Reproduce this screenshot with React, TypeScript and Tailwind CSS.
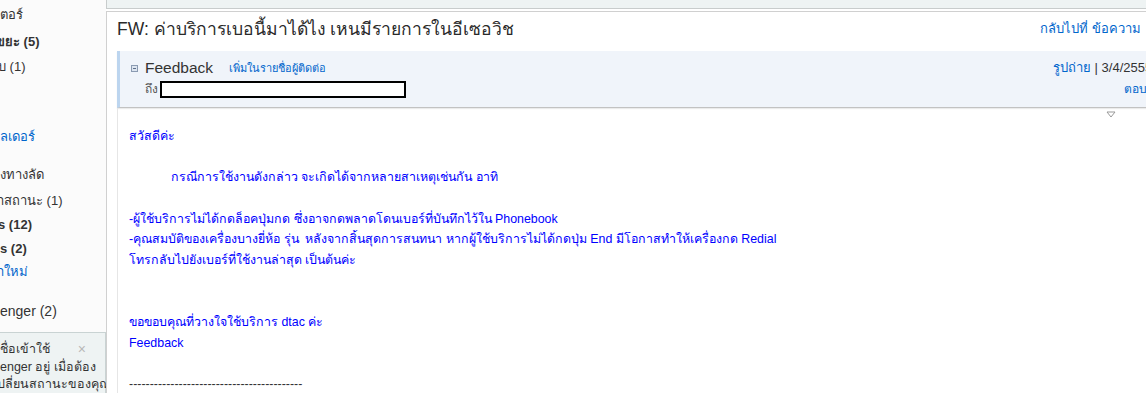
const FONT = "font-['Liberation_Sans','Tahoma','DejaVu_Sans',sans-serif]";

function Sidebar() {
  return (
    <div className="w-[106px] shrink-0 overflow-hidden bg-[#fbfbfb] text-[13px] text-[#333]">
      <div className="mt-[5px] h-[20px] leading-[20px] whitespace-nowrap">ตอร์</div>
      <div className="mt-[7px] h-[20px] leading-[20px] whitespace-nowrap font-bold -ml-[4px]">ขยะ (5)</div>
      <div className="mt-[5px] h-[20px] leading-[20px] whitespace-nowrap -ml-[2px]">บ (1)</div>
      <div className="mt-[50px] h-[20px] leading-[20px] whitespace-nowrap text-[#0066cc]">ลเดอร์</div>
      <div className="mt-[18px] h-[20px] leading-[20px] whitespace-nowrap">งทางลัด</div>
      <div className="mt-[6px] h-[20px] leading-[20px] whitespace-nowrap -ml-[3px]">าสถานะ (1)</div>
      <div className="mt-[4px] h-[20px] leading-[20px] whitespace-nowrap font-bold -ml-[2px]">s (12)</div>
      <div className="mt-[4px] h-[20px] leading-[20px] whitespace-nowrap font-bold">s (2)</div>
      <div className="mt-[3px] h-[20px] leading-[20px] whitespace-nowrap text-[#0066cc] -ml-[3px]">าใหม่</div>
      <div className="mt-[19px] h-[20px] leading-[20px] whitespace-nowrap text-[14px]">enger (2)</div>
      <div className="mt-[11px] h-[80px] border-t border-r border-[#c9d3d3] bg-[#eef3f3] pt-[8px] text-[12.5px] leading-[17.5px]">
        <div className="flex items-center whitespace-nowrap">
          <span>ชื่อเข้าใช้</span>
          <span className="ml-auto mr-[19px] text-[14px] text-[#b8b8b8]">×</span>
        </div>
        <div className="whitespace-nowrap">enger อยู่ เมื่อต้อง</div>
        <div className="whitespace-nowrap -ml-[3px]">ปลี่ยนสถานะของคุณ</div>
      </div>
    </div>
  );
}

function MessageHeader() {
  return (
    <div className="ml-[10px] mt-[5px] h-[57px] flex border-l-[3px] border-[#bcd5ef] border-b border-b-[#c2c2c2] bg-[#f0f4fa] shadow-[0_1px_1px_rgba(0,0,0,0.08)]">
      <div className="flex-1 pl-[11px] pt-[7px]">
        <div className="flex items-center h-[20px]">
          <span className="w-[7px] h-[7px] border border-[#8b9bb2] bg-[#dde5f0] flex items-center justify-center">
            <span className="w-[3px] h-px bg-[#5d6f8a]" />
          </span>
          <span className="ml-[7px] text-[15.5px] text-[#333]">Feedback</span>
          <span className="ml-[16px] text-[11px] text-[#0066cc]">เพิ่มในรายชื่อผู้ติดต่อ</span>
        </div>
        <div className="flex items-center h-[18px] mt-[2px] pl-[14px]">
          <span className="text-[12px] text-[#555]">ถึง</span>
          <span className="ml-[2px] w-[246px] h-[17px] border-2 border-black bg-white" />
        </div>
      </div>
      <div className="w-[197px] pt-[7px] text-[13px]">
        <div className="h-[20px] leading-[20px] whitespace-nowrap">
          <span className="text-[#0066cc]">รูปถ่าย</span>
          <span className="text-[#333]"> | 3/4/2555</span>
        </div>
        <div className="mt-[2px] h-[18px] leading-[18px] pl-[71px] text-[12px] text-[#0066cc] whitespace-nowrap">ตอบกลับ</div>
      </div>
    </div>
  );
}

const body: { text: string; indent?: boolean }[] = [
  { text: "สวัสดีค่ะ" },
  { text: "" },
  { text: "กรณีการใช้งานดังกล่าว จะเกิดได้จากหลายสาเหตุเช่นกัน อาทิ", indent: true },
  { text: "" },
  { text: "-ผู้ใช้บริการไม่ได้กดล็อคปุ่มกด ซึ่งอาจกดพลาดโดนเบอร์ที่บันทึกไว้ใน Phonebook" },
  { text: "-คุณสมบัติของเครื่องบางยี่ห้อ รุ่น  หลังจากสิ้นสุดการสนทนา หากผู้ใช้บริการไม่ได้กดปุ่ม End มีโอกาสทำให้เครื่องกด Redial" },
  { text: "โทรกลับไปยังเบอร์ที่ใช้งานล่าสุด เป็นต้นค่ะ" },
  { text: "" },
  { text: "" },
  { text: "ขอขอบคุณที่วางใจใช้บริการ dtac ค่ะ" },
  { text: "Feedback" },
  { text: "" },
];

export default function App() {
  return (
    <div className={`w-full h-[393px] overflow-hidden bg-white ${FONT}`}>
      <div className="flex w-[1250px] h-[393px]">
        <Sidebar />
        <div className="flex-1 flex flex-col min-h-0">
          <div className="h-[9px] shrink-0 border-l border-b border-[#c8cccc] bg-[#eef3f3]" />
          <div className="mt-[2px] shrink-0 border-l border-t border-[#d0d0d0]">
            <div className="flex items-center h-[34px] pl-[10px]">
              <div className="flex-1 text-[17.5px] text-[#2a2a2a] whitespace-nowrap">
                FW: ค่าบริการเบอนี้มาได้ไง เหนมีรายการในอีเซอวิช
              </div>
              <div className="w-[210px] flex items-center text-[13px] whitespace-nowrap">
                <span className="text-[#0066cc]">กลับไปที่ ข้อความ</span>
                <span className="ml-[17px] text-[#c8c8c8]">|</span>
                <span className="ml-[8px] text-[#0066cc]">ถัดไป</span>
              </div>
            </div>
            <MessageHeader />
            <div className="ml-[10px] border-l border-[#e6e6e6] pl-[11px] pb-[20px]">
              <div className="h-[18px] pl-[977px] pt-[3px]">
                <svg width="10" height="7" viewBox="0 0 10 7">
                  <path d="M1 1 H9 L5 6 Z" fill="none" stroke="#999" strokeWidth="1" />
                </svg>
              </div>
              <div className="text-[12.4px] leading-[20.67px] text-[#0000ff]">
                {body.map((l, i) => (
                  <div key={i} className={`h-[20.67px] whitespace-pre ${l.indent ? "pl-[42px]" : ""}`}>
                    {l.text || "\u00a0"}
                  </div>
                ))}
                <div className="h-[20.67px] text-[#333] whitespace-pre">------------------------------------------</div>
              </div>
            </div>
          </div>
        </div>
      </div>
    </div>
  );
}
